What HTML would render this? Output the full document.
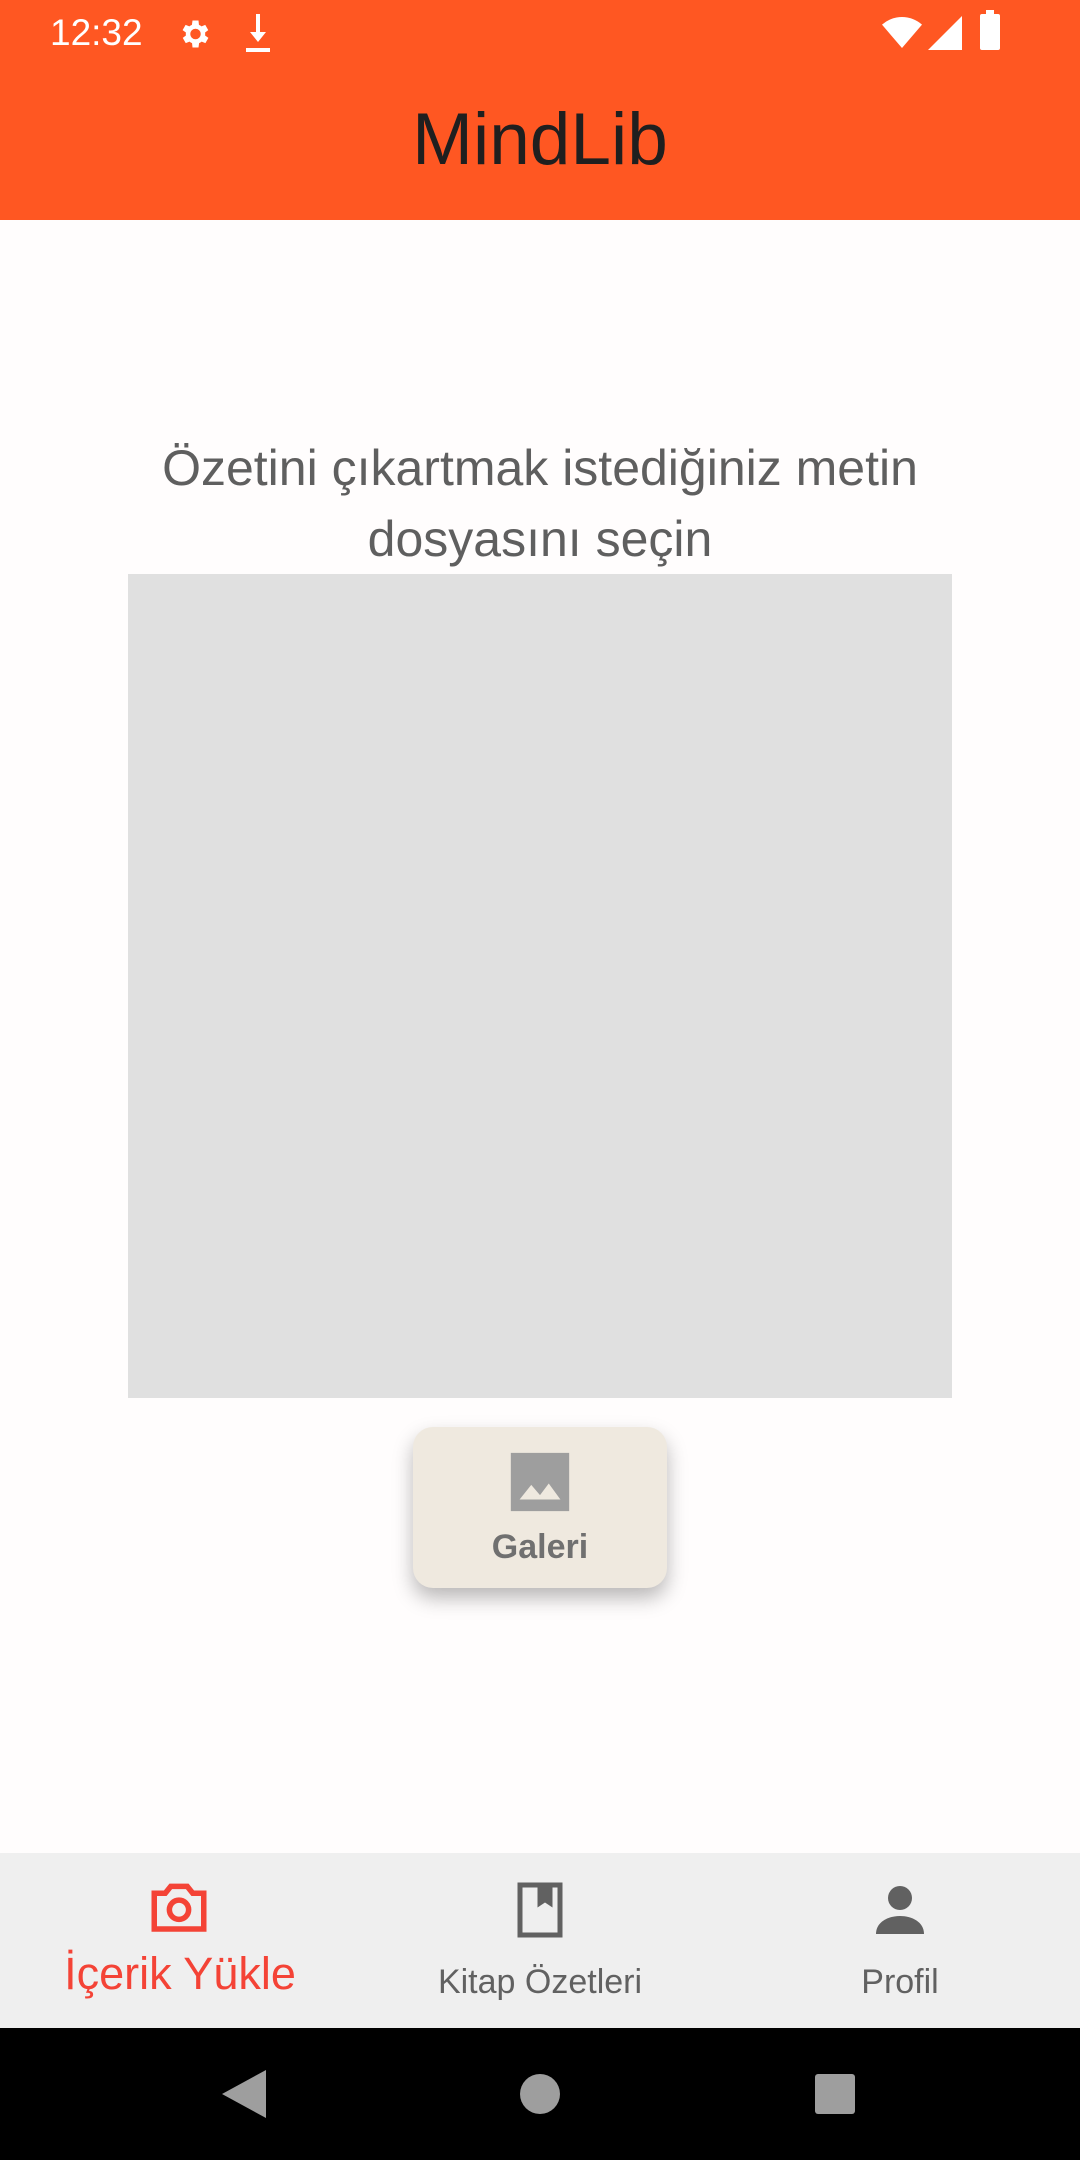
<!DOCTYPE html>
<html><head><meta charset="utf-8"><style>
*{margin:0;padding:0;box-sizing:border-box}
body{width:1080px;height:2160px;position:relative;background:#fffdfd;font-family:"Liberation Sans",Roboto,sans-serif;overflow:hidden}
.top{position:absolute;left:0;top:0;width:1080px;height:220px;background:#ff5722}
.abs{position:absolute}
</style></head><body>
<div class="top"></div>
<div class="abs" style="left:50px;top:12px;font-size:37px;color:#fff">12:32</div>
<svg class="abs" style="left:176px;top:16px" width="36" height="36" viewBox="0 0 24 24"><path fill="#fff" d="M19.4 13a7.5 7.5 0 000-2l2.1-1.6-2-3.5-2.5 1a7 7 0 00-1.7-1L15 3h-4l-.4 2.9a7 7 0 00-1.7 1l-2.5-1-2 3.5L6.6 11a7.5 7.5 0 000 2l-2.1 1.6 2 3.5 2.5-1a7 7 0 001.7 1L11 21h4l.4-2.9a7 7 0 001.7-1l2.5 1 2-3.5zM13 15.5a3.5 3.5 0 110-7 3.5 3.5 0 010 7z"/></svg>
<svg class="abs" style="left:240px;top:14px" width="36" height="40" viewBox="0 0 18 20"><path fill="#fff" d="M8 0h2v9h3l-4 5-4-5h3z M3 17h12v2H3z"/></svg>
<svg class="abs" style="left:882px;top:16px" width="40" height="34" viewBox="0 0 24 20"><path fill="#fff" d="M12 19L0 5a18 18 0 0124 0z"/></svg>
<svg class="abs" style="left:928px;top:16px" width="34" height="34" viewBox="0 0 20 20"><path fill="#fff" d="M20 0v20H0z"/></svg>
<div class="abs" style="left:980px;top:14px;width:20px;height:36px;background:#fff;border-radius:2px"></div>
<div class="abs" style="left:986px;top:10px;width:8px;height:6px;background:#fff"></div>
<div class="abs" style="left:0;top:98px;width:1080px;text-align:center;font-size:73px;color:#1f1f1f;line-height:84px">MindLib</div>
<div class="abs" style="left:0;top:433px;width:1080px;text-align:center;font-size:50px;color:#5f5f5f;line-height:71px">Özetini çıkartmak istediğiniz metin<br>dosyasını seçin</div>
<div class="abs" style="left:128px;top:574px;width:824px;height:824px;background:#e0e0e0"></div>
<div class="abs" style="left:413px;top:1427px;width:254px;height:161px;background:#efe9df;border-radius:20px;box-shadow:0 10px 20px rgba(0,0,0,.28)"></div>
<svg class="abs" style="left:505px;top:1447px" width="70" height="70" viewBox="0 0 24 24"><path fill="#9e9e9e" d="M2 2h20v20H2z"/><path fill="#efe9df" d="M5 18l4-5 3 3.5 3-4 4 5.5z"/></svg>
<div class="abs" style="left:413px;top:1528px;width:254px;text-align:center;font-size:34px;font-weight:bold;color:#707070">Galeri</div>
<div class="abs" style="left:0;top:1853px;width:1080px;height:175px;background:#efefef"></div>
<svg class="abs" style="left:146px;top:1874px" width="66" height="66" viewBox="0 0 24 24"><path fill="none" stroke="#f44336" stroke-width="2" d="M3 7h4l2-2.5h6L17 7h4v13H3z"/><circle cx="12" cy="13" r="3.5" fill="none" stroke="#f44336" stroke-width="2"/></svg>
<div class="abs" style="left:0;top:1948px;width:360px;text-align:center;font-size:45px;color:#f44336">İçerik Yükle</div>
<svg class="abs" style="left:515px;top:1882px" width="50" height="56" viewBox="0 0 20 22"><path fill="none" stroke="#616161" stroke-width="2" d="M2 1h16v20H2z"/><path fill="#616161" d="M9 1h6v9l-3-2-3 2z"/></svg>
<div class="abs" style="left:360px;top:1963px;width:360px;text-align:center;font-size:34px;color:#616161">Kitap Özetleri</div>
<svg class="abs" style="left:864px;top:1874px" width="72" height="72" viewBox="0 0 24 24"><circle cx="12" cy="8" r="4" fill="#616161"/><path fill="#616161" d="M4 20c0-4 4-6 8-6s8 2 8 6z"/></svg>
<div class="abs" style="left:720px;top:1963px;width:360px;text-align:center;font-size:34px;color:#616161">Profil</div>
<div class="abs" style="left:0;top:2028px;width:1080px;height:132px;background:#000"></div>
<svg class="abs" style="left:222px;top:2070px" width="44" height="48" viewBox="0 0 22 24"><path fill="#9e9e9e" d="M22 0v24L0 12z"/></svg>
<div class="abs" style="left:520px;top:2074px;width:40px;height:40px;border-radius:50%;background:#9e9e9e"></div>
<div class="abs" style="left:815px;top:2074px;width:40px;height:40px;border-radius:3px;background:#9e9e9e"></div>
</body></html>
